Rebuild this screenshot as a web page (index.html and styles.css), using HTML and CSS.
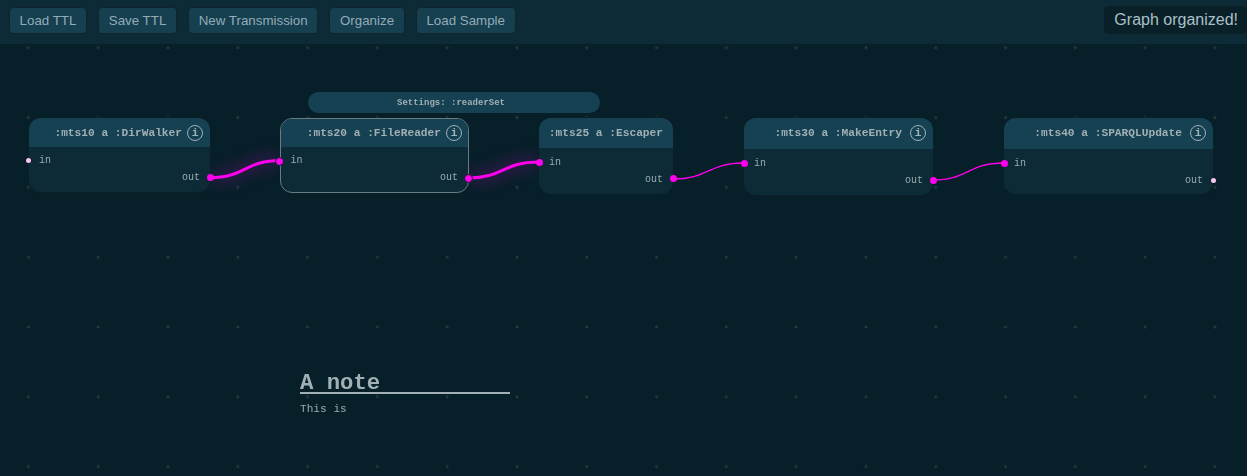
FILE: index.html
```html
<!DOCTYPE html>
<html lang="en">
<head>
    <meta charset="UTF-8">
    <meta name="viewport" content="width=device-width, initial-scale=1.0">
    <title>Transmission Editor</title>
    <link rel="stylesheet" href="styles.css">
</head>
<body>
    <header class="toolbar">
        <button class="tool-btn">Load TTL</button>
        <button class="tool-btn">Save TTL</button>
        <button class="tool-btn">New Transmission</button>
        <button class="tool-btn">Organize</button>
        <button class="tool-btn">Load Sample</button>
        <div class="toast">Graph organized!</div>
    </header>

    <main class="canvas">
        <svg class="edges" width="1247" height="432" viewBox="0 44 1247 432">
            <defs>
                <filter id="glow" x="-30%" y="-150%" width="160%" height="400%">
                    <feGaussianBlur stdDeviation="8"/>
                </filter>
            </defs>
            <path class="edge-glow" d="M210 177.7 C245 177.7 245 160.5 280 160.5" filter="url(#glow)"/>
            <path class="edge-glow" d="M468.5 178 C503 178 503 162 538.5 162" filter="url(#glow)"/>
            <path class="edge-bold" d="M210 177.7 C245 177.7 245 160.5 280 160.5"/>
            <path class="edge-bold" d="M468.5 178 C503 178 503 162 538.5 162"/>
            <path class="edge" d="M673 179 C708 179 708 163 743.5 163"/>
            <path class="edge" d="M933 180 C968 180 968 163 1003.5 163"/>
        </svg>

        <div class="settings-pill">Settings: :readerSet</div>

        <section class="node node-dirwalker">
            <div class="node-header">:mts10 a :DirWalker<span class="info">i</span></div>
            <div class="port-row">in</div>
            <div class="port-row port-out">out</div>
            <span class="handle handle-free handle-in"></span>
            <span class="handle handle-out"></span>
        </section>

        <section class="node node-reader selected">
            <div class="node-header">:mts20 a :FileReader<span class="info">i</span></div>
            <div class="port-row">in</div>
            <div class="port-row port-out">out</div>
            <span class="handle handle-in ringed"></span>
            <span class="handle handle-out ringed"></span>
        </section>

        <section class="node node-escaper">
            <div class="node-header">:mts25 a :Escaper</div>
            <div class="port-row">in</div>
            <div class="port-row port-out">out</div>
            <span class="handle handle-in"></span>
            <span class="handle handle-out"></span>
        </section>

        <section class="node node-entry">
            <div class="node-header">:mts30 a :MakeEntry<span class="info">i</span></div>
            <div class="port-row">in</div>
            <div class="port-row port-out">out</div>
            <span class="handle handle-in"></span>
            <span class="handle handle-out"></span>
        </section>

        <section class="node node-update">
            <div class="node-header">:mts40 a :SPARQLUpdate<span class="info">i</span></div>
            <div class="port-row">in</div>
            <div class="port-row port-out">out</div>
            <span class="handle handle-in"></span>
            <span class="handle handle-free handle-out"></span>
        </section>

        <article class="note">
            <h1>A note</h1>
            <p>This is</p>
        </article>
    </main>
</body>
</html>
```

FILE: styles.css
```css
html, body {
    height: 100%;
}

body {
    margin: 0;
    display: flex;
    flex-direction: column;
    overflow: hidden;
    background-color: #071f29;
    color: #a0b0b4;
    font-family: "Liberation Mono", monospace;
}

.toolbar {
    height: 44px;
    flex: none;
    display: flex;
    align-items: flex-start;
    gap: 11.2px;
    padding: 7px 0 0 9px;
    box-sizing: border-box;
    background-color: #0d2b36;
}

.tool-btn {
    height: 27px;
    padding: 0 9.6px;
    background-color: #163f50;
    color: #93acb6;
    border: 1px solid #10242c;
    border-radius: 4px;
    font-family: "Liberation Sans", sans-serif;
    font-size: 13.33px;
}

.toast {
    margin: -1px 0 0 auto;
    height: 28px;
    line-height: 27px;
    padding: 0 9px 0 10px;
    background-color: #0a2029;
    border-radius: 4px;
    color: #a9c0c8;
    font-family: "Liberation Sans", sans-serif;
    font-size: 16px;
}

/* own layer, gives the softer text of the graph view */
.canvas {
    position: relative;
    flex: 1;
    will-change: transform;
    background-image: radial-gradient(circle at center, #28383f 1.2px, transparent 1.8px);
    background-size: 69.8px 69.8px;
    background-position: -6.5px -31.1px;
}

.edges {
    position: absolute;
    left: 0;
    top: 0;
}

.edges path {
    fill: none;
    stroke: #ff00ee;
}

.edge {
    stroke-width: 1.3;
}

.edge-bold {
    stroke-width: 3;
}

.edge-glow {
    stroke-width: 10;
    opacity: 0.22;
}

.node {
    --in-y: 39px;
    --out-y: 56px;
    position: absolute;
    top: 74px;
    box-sizing: border-box;
    display: flex;
    flex-direction: column;
    background-color: #0d2b36;
    box-shadow: 0 0 0 1px #0c1f27;
    border-radius: 12px;
}

.node-dirwalker {
    left: 29px;
    width: 181px;
    height: 74px;
}

.node-reader {
    left: 280px;
    width: 189px;
    height: 75px;
    --in-y: 38px;
    --out-y: 55px;
}

.node-escaper {
    left: 539px;
    width: 134px;
    height: 75.5px;
    --in-y: 40.5px;
    --out-y: 57px;
}

.node-entry {
    left: 744px;
    width: 189px;
    height: 76.5px;
    --in-y: 41.5px;
    --out-y: 58.5px;
}

.node-update {
    left: 1004px;
    width: 209px;
    height: 76px;
    --in-y: 41.5px;
    --out-y: 58.5px;
}

.selected {
    border: 1px solid #6a7b80;
    box-shadow: none;
}

.node-header {
    height: 29px;
    flex: none;
    display: flex;
    align-items: center;
    justify-content: flex-end;
    gap: 5px;
    padding: 0 7px;
    background-color: #164152;
    border-radius: 12px 12px 0 0;
    font-size: 11.2px;
    font-weight: bold;
    white-space: pre;
}

.selected .node-header {
    height: 28px;
    padding-right: 6px;
    border-radius: 11px 11px 0 0;
}

.node-escaper .node-header {
    padding-right: 10px;
    height: 30px;
}

.node-entry .node-header,
.node-update .node-header {
    height: 30.5px;
    gap: 8px;
}

.info {
    width: 16px;
    height: 16px;
    box-sizing: border-box;
    display: flex;
    align-items: center;
    justify-content: center;
    border: 1px solid #a0b0b4;
    border-radius: 50%;
}

.port-row {
    height: 17px;
    line-height: 17px;
    padding: 0 10px;
    font-size: 10px;
    color: #9aabaf;
}

.selected .port-row {
    padding: 0 10px 0 9.5px;
}

.port-row:nth-child(2) {
    margin-top: 5px;
}

.node-escaper .port-row:nth-child(2) {
    margin-top: 5.5px;
}

.node-entry .port-row:nth-child(2),
.node-update .port-row:nth-child(2) {
    margin-top: 6px;
}

.port-out {
    text-align: right;
}

.handle {
    position: absolute;
    width: 7px;
    height: 7px;
    border-radius: 50%;
    background-color: #ff00ee;
}

.handle-in {
    left: -3.5px;
    top: var(--in-y);
}

.handle-out {
    right: -3.5px;
    top: var(--out-y);
}

.handle-free {
    width: 5px;
    height: 5px;
    background-color: #fbc4f3;
}

.handle-free.handle-in {
    left: -3px;
    top: calc(var(--in-y) + 1px);
}

.handle-free.handle-out {
    right: -3px;
    top: calc(var(--out-y) + 1px);
}

.ringed {
    border: 1px solid #0c1f27;
    box-sizing: border-box;
    width: 9px;
    height: 9px;
}

.ringed.handle-in {
    left: -6px;
}

.ringed.handle-out {
    right: -5px;
}

.settings-pill {
    position: absolute;
    left: 308px;
    top: 48px;
    width: 292px;
    height: 21px;
    padding-right: 6px;
    box-sizing: border-box;
    line-height: 22px;
    background-color: #164152;
    border-radius: 10.5px;
    text-align: center;
    font-size: 9px;
    font-weight: bold;
}

.note {
    position: absolute;
    left: 300px;
    top: 326px;
    width: 210px;
}

.note h1 {
    margin: 0;
    height: 22px;
    line-height: 26px;
    border-bottom: 2px solid #a0b0b4;
    font-size: 22.28px;
}

.note p {
    margin: 8.5px 0 0;
    font-size: 11.14px;
    line-height: 13px;
    color: #9aabaf;
}
```
